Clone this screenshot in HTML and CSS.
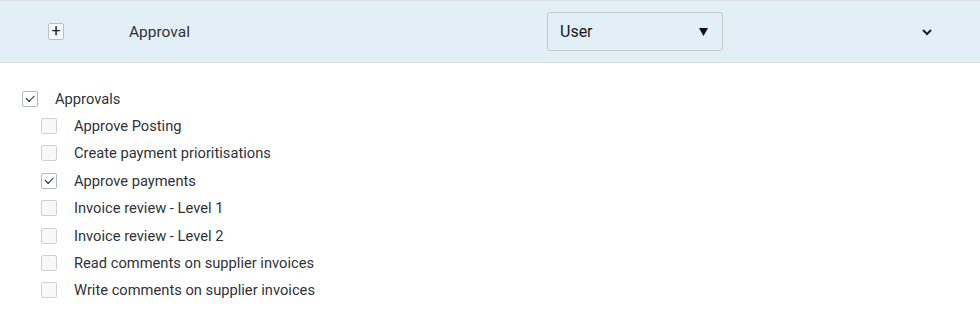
FILE: index.html
```html
<!DOCTYPE html>
<html lang="en">
<head>
  <meta charset="UTF-8" />
  <meta name="viewport" content="width=device-width, initial-scale=1.0"/>
  <title>Approval permissions</title>
  <link rel="stylesheet" href="styles.css">
</head>
<body>
  <div class="role-row">
    <span class="expand">+</span>
    <span class="role-name">Approval</span>
    <div class="role-select">
      <span>User</span>
      <svg width="9" height="8" viewBox="0 0 9 8"><polygon points="0,0 9,0 4.5,8" fill="#111"/></svg>
    </div>
    <svg class="chevron" width="10" height="7" viewBox="0 0 10 7"><polyline points="1,1 5,5 9,1" fill="none" stroke="#1d1d1d" stroke-width="2"/></svg>
  </div>

  <!-- Permission tree -->
  <ul class="perms">
    <li class="perm">
      <span class="box checked"></span>
      <span>Approvals</span>
    </li>
    <li class="perm child"><span class="box"></span><span>Approve Posting</span></li>
    <li class="perm child"><span class="box"></span><span>Create payment prioritisations</span></li>
    <li class="perm child"><span class="box checked"></span><span>Approve payments</span></li>
    <li class="perm child"><span class="box"></span><span>Invoice review - Level 1</span></li>
    <li class="perm child"><span class="box"></span><span>Invoice review - Level 2</span></li>
    <li class="perm child"><span class="box"></span><span>Read comments on supplier invoices</span></li>
    <li class="perm child"><span class="box"></span><span>Write comments on supplier invoices</span></li>
  </ul>
</body>
</html>
```

FILE: styles.css
```css
body {
  margin: 0;
  font-family: Roboto, "Liberation Sans", sans-serif;
  color: #2f3337;
  background: white;
}
.role-row {
  display: flex;
  align-items: center;
  height: 61px;
  padding-left: 48px;
  padding-right: 48px;
  background-color: #e2eff7;
  border-top: 1px solid #dadfe2;
  border-bottom: 1px solid #d9dfe3;
}
.expand {
  width: 14px;
  height: 15px;
  border: 1px solid #b9bfc3;
  border-radius: 2px;
  background: #f7f8f9;
  font-size: 16px;
  line-height: 14px;
  text-align: center;
  color: #222;
}
.role-name {
  width: 418px;
  margin-left: 65px;
  font-size: 15.5px;
}
.role-select {
  display: flex;
  align-items: center;
  justify-content: space-between;
  box-sizing: border-box;
  width: 176px;
  height: 39px;
  padding: 0 14px 0 12px;
  border: 1px solid #c4c9cc;
  border-radius: 3px;
  font-size: 16px;
  color: #15191c;
}
.chevron {
  margin-left: auto;
  margin-top: 1px;
}
.perms {
  list-style: none;
  margin: 0;
  padding: 22px 0 0 22px;
}
.perm {
  display: flex;
  align-items: center;
  gap: 17px;
  height: 27.4px;
  font-size: 14.7px;
}
.perm.child {
  padding-left: 19px;
}
.box {
  position: relative;
  box-sizing: border-box;
  width: 16px;
  height: 16px;
  border: 1px solid #cdd1d4;
  border-radius: 2px;
  background: #f8f8f8;
}
.box.checked {
  border-color: #b3b8bb;
  background: white;
}
.box.checked::after {
  content: "";
  position: absolute;
  left: 3px;
  top: 3px;
  width: 7px;
  height: 3.5px;
  border-left: 1.5px solid #1e1e1e;
  border-bottom: 1.5px solid #1e1e1e;
  transform: rotate(-45deg);
}
```
